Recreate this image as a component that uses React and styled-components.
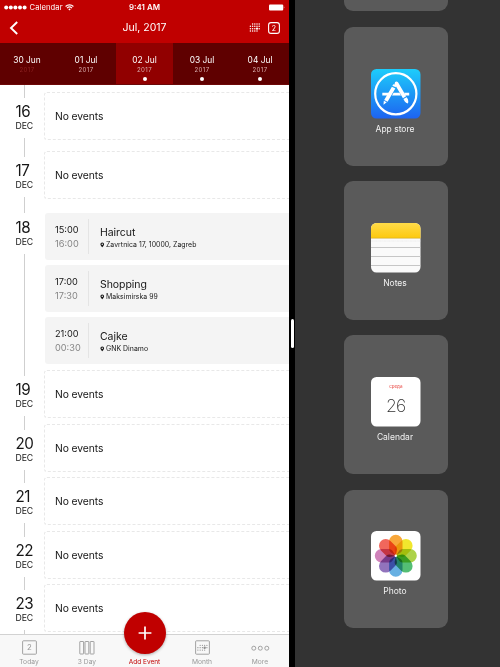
import React from "react";
import styled, { createGlobalStyle, css } from "styled-components";

const Global = createGlobalStyle`
  *, *::before, *::after { box-sizing: border-box; }
  body { margin: 0; overflow: hidden; font-family: Inter, "Liberation Sans", sans-serif; }
`;

const Screen = styled.div`
  display: flex;
  width: 500px;
  height: 667px;
  overflow: hidden;
  background: #333;
`;

/* ---------- Calendar pane ---------- */

const CalendarPane = styled.main`
  display: flex;
  flex-direction: column;
  width: 289px;
  height: 667px;
  background: #fff;
  color: #161616;
  overflow: hidden;
`;

const Header = styled.header`
  flex: none;
  height: 43px;
  background: #c00000;
  color: #fff;
`;

const StatusBar = styled.div`
  display: grid;
  grid-template-columns: 1fr auto 1fr;
  align-items: center;
  height: 14px;
  padding: 1px 4px 0 4px;
  font-size: 7.6px;
  line-height: 13px;
`;

const Carrier = styled.div`
  display: flex;
  align-items: center;
  gap: 2.5px;
  letter-spacing: 0.1px;
`;

const Clock = styled.div`
  font-weight: 600;
  font-size: 7.9px;
`;

const Battery = styled.svg`
  justify-self: end;
  display: block;
`;

const TitleBar = styled.div`
  display: grid;
  grid-template-columns: 1fr auto 1fr;
  align-items: center;
  height: 27px;
  padding: 0 9px;
`;

const Title = styled.h1`
  margin: 0;
  font-size: 10.5px;
  line-height: 14px;
  font-weight: 400;
`;

const Actions = styled.div`
  display: flex;
  justify-content: flex-end;
  align-items: center;
  gap: 8px;
`;

const DateStrip = styled.nav`
  flex: none;
  display: grid;
  grid-template-columns: 58px 58px 57px 58px 58px;
  height: 42px;
  background: #5f0000;
  border-bottom: 1px solid #6d0808;
`;

const DateCell = styled.div`
  display: flex;
  flex-direction: column;
  align-items: center;
  padding-top: 11px;
  padding-right: ${(p) => p.$inset || 0}px;
  background: ${(p) => (p.$active ? "#910000" : "transparent")};
  color: #fff;
  font-size: 8.4px;
  line-height: 12px;
`;

const Year = styled.span`
  font-size: 6.1px;
  line-height: 7px;
  letter-spacing: 0.35px;
  color: ${(p) => (p.$dim ? "#8c2020" : "#d8acac")};
`;

const Dot = styled.span`
  width: 4px;
  height: 4px;
  margin-top: 3.5px;
  border-radius: 50%;
  background: #fff;
`;

const Timeline = styled.section`
  flex: 1;
  min-height: 0;
  overflow: hidden;
`;

const LeadIn = styled.div`
  width: 1px;
  height: 7px;
  margin-left: 24px;
  background: #cfcfcf;
`;

const DayRow = styled.div`
  display: grid;
  grid-template-columns: 44px 1fr;
  height: ${(p) => p.$height}px;
`;

const Rail = styled.div`
  display: flex;
  flex-direction: column;
`;

const RailLine = styled.i`
  width: 1px;
  margin-left: 24px;
  background: #cfcfcf;
  ${(p) => (p.$lead ? css`height: 6px;` : css`flex: 1;`)}
`;

const DayNumber = styled.div`
  padding-left: 15.4px;
  margin-top: ${(p) => (p.$first ? 6 : 5)}px;
  font-size: 15.2px;
  line-height: 17px;
  letter-spacing: -0.3px;
`;

const MonthName = styled.div`
  margin: 0 0 6px;
  padding-left: 15.5px;
  font-size: 8.7px;
  line-height: 12px;
  letter-spacing: -0.1px;
`;

const EmptySlot = styled.div`
  display: flex;
  align-items: center;
  height: 48px;
  padding: 0 0 0 10px;
  border: 1px dashed #e8e8e8;
  border-right: 0;
  border-radius: 3px 0 0 3px;
  font-size: 10.3px;
  letter-spacing: -0.07px;
`;

const EventList = styled.div`
  display: grid;
  grid-auto-rows: 47px;
  gap: 5px;
  padding-left: 1px;
`;

const EventCard = styled.article`
  display: grid;
  grid-template-columns: 44px 1fr;
  align-items: center;
  border-radius: 3px 0 0 3px;
  background: #f4f4f4;
`;

const Times = styled.div`
  height: 35px;
  padding: 4px 0 0 10px;
  border-right: 1px solid #e4e4e4;
  font-size: 9.2px;
  line-height: 14px;
`;

const EndTime = styled.div`
  color: #858585;
`;

const Details = styled.div`
  padding: 3px 0 0 11px;
`;

const EventName = styled.div`
  font-size: 10.5px;
  line-height: 13px;
  letter-spacing: -0.05px;
`;

const Place = styled.div`
  display: flex;
  align-items: center;
  gap: 1.5px;
  font-size: 6.9px;
  line-height: 11px;
  letter-spacing: 0.04px;
`;

const TabBar = styled.nav`
  flex: none;
  display: grid;
  grid-template-columns: 58px 58px 57px 58px 58px;
  height: 33px;
  border-top: 1px solid #d2d2d2;
  background: #f8f8f8;
`;

const Tab = styled.div`
  display: flex;
  flex-direction: column;
  align-items: center;
  justify-content: flex-end;
  height: 32px;
  padding-bottom: 1px;
  color: ${(p) => (p.$accent ? "#c00000" : "#989898")};
  font-size: ${(p) => (p.$accent ? 6.5 : 6.7)}px;
  line-height: 8px;
  white-space: nowrap;

  & > svg { flex: none; margin-bottom: 3px; }
`;

const AddButton = styled.button`
  flex: none;
  display: grid;
  place-items: center;
  width: 42px;
  height: 42px;
  margin-bottom: 4px;
  padding: 0;
  border: 0;
  border-radius: 50%;
  background: #c00000;
  box-shadow: 0 1px 3px rgba(0, 0, 0, 0.3);
`;

/* ---------- Split divider and app picker ---------- */

const Divider = styled.div`
  flex: none;
  display: grid;
  place-items: center;
  width: 6px;
  background: #000;
`;

const Grip = styled.span`
  width: 3px;
  height: 29px;
  border-radius: 2px;
  background: #fff;
`;

const AppPane = styled.aside`
  flex: 1;
  display: flex;
  flex-direction: column;
  align-items: center;
  gap: 15.6px;
  padding-right: 4px;
  background: #333;
`;

const AppCard = styled.div`
  flex: none;
  display: flex;
  flex-direction: column;
  align-items: center;
  width: 104px;
  height: 138.6px;
  padding: 41.6px 1px 0 0;
  border-radius: 9px;
  background: #5a5a5a;
  color: #f2f2f2;
  font-size: 8.5px;
  line-height: 12px;

  & > svg { display: block; margin: 0 0 4.1px 1px; }
`;

const PreviousCard = styled.div`
  flex: none;
  width: 104px;
  height: 11.4px;
  border-radius: 0 0 9px 9px;
  background: #5a5a5a;
`;

/* ---------- Icons ---------- */

const SignalIcon = () => (
  <svg width="23" height="5" viewBox="0 0 23 5" fill="#fff">
    {[2.2, 6.8, 11.4, 16, 20.6].map((x) => <circle key={x} cx={x} cy="2.5" r="2" />)}
  </svg>
);

const WifiIcon = () => (
  <svg width="9" height="7" viewBox="0 0 9 7" fill="none" stroke="#fff" strokeWidth="1.1">
    <path d="M.6 2.5a5.5 5.5 0 0 1 7.8 0M2 4.1a3.6 3.6 0 0 1 5 0" />
    <path d="M3.3 5.2a1.7 1.7 0 0 1 2.4 0L4.5 6.5z" fill="#fff" stroke="none" />
  </svg>
);

const BatteryIcon = () => (
  <Battery width="16" height="7" viewBox="0 0 16 7" fill="#fff">
    <rect x="0" y=".4" width="14.2" height="6" rx="1" />
    <path d="M14.8 2.3q1.2 1.1 0 2.2z" />
  </Battery>
);

const BackIcon = () => (
  <svg width="10" height="14" viewBox="0 0 10 14" fill="none" stroke="#fff" strokeWidth="1.9">
    <path d="M8.2 1 2 7l6.2 6" />
  </svg>
);

const GridIcon = () => (
  <svg width="11" height="9" viewBox="0 0 11 9" fill="#fff">
    {[0, 1, 2, 3].map((r) =>
      [0, 1, 2, 3, 4].map((c) =>
        (r === 0 && c === 0) || (r === 3 && c === 4) ? null : (
          <circle key={`${r}${c}`} cx={1.4 + c * 2.2} cy={1 + r * 2.35} r={r === 2 && c === 3 ? 1.1 : 0.75} />
        )
      )
    )}
  </svg>
);

const DayBoxIcon = () => (
  <svg width="12" height="12" viewBox="0 0 12 12">
    <rect x=".6" y=".6" width="10.8" height="10.8" rx="2.4" fill="none" stroke="#fff" strokeWidth="1.1" />
    <text x="6" y="8.5" textAnchor="middle" fontSize="7" fill="#fff">2</text>
  </svg>
);

const PinIcon = () => (
  <svg width="4.5" height="6" viewBox="0 0 9 12">
    <path fillRule="evenodd" fill="#161616" d="M4.5.8A3.7 3.7 0 0 0 .8 4.5c0 2.4 3.7 6 3.7 6s3.7-3.6 3.7-6A3.7 3.7 0 0 0 4.5.8zm0 2.2a1.5 1.5 0 1 1 0 3 1.5 1.5 0 0 1 0-3z" />
  </svg>
);

const TodayIcon = () => (
  <svg width="15" height="15" viewBox="0 0 15 15">
    <rect x=".6" y=".8" width="13.8" height="13.4" rx=".8" fill="none" stroke="#989898" strokeWidth=".9" />
    <text x="7.5" y="10.3" textAnchor="middle" fontSize="7.8" fill="#989898">2</text>
  </svg>
);

const ThreeDayIcon = () => (
  <svg width="16" height="15" viewBox="0 0 16 15" fill="none" stroke="#989898" strokeWidth=".9">
    {[0.8, 6, 11.2].map((x) => <rect key={x} x={x} y="1.5" width="3.8" height="12.5" rx=".4" />)}
  </svg>
);

const MonthIcon = () => (
  <svg width="15" height="15" viewBox="0 0 15 15" fill="#8c8c8c">
    <rect x=".6" y=".8" width="13.8" height="13.4" rx=".8" fill="none" stroke="#989898" strokeWidth=".9" />
    {[0, 1, 2].map((r) =>
      [0, 1, 2, 3, 4].map((c) =>
        (r === 0 && c === 0) || (r === 2 && c === 4) ? null : (
          <circle key={`${r}${c}`} cx={2.9 + c * 2.25} cy={5.3 + r * 2.4} r={r === 1 && c === 3 ? 1.2 : 0.6} />
        )
      )
    )}
  </svg>
);

const MoreIcon = () => (
  <svg width="19" height="15" viewBox="0 0 19 15" fill="none" stroke="#989898" strokeWidth=".9">
    {[2.8, 9.3, 15.8].map((x) => <circle key={x} cx={x} cy="8.2" r="2" />)}
  </svg>
);

const PlusIcon = () => (
  <svg width="14" height="14" viewBox="0 0 14 14" stroke="#fff" strokeWidth="1.7">
    <path d="M7 .6v12.8M.6 7h12.8" />
  </svg>
);

const AppStoreIcon = () => (
  <svg width="50" height="50" viewBox="0 0 50 50">
    <defs>
      <linearGradient id="store" x2="0" y2="1">
        <stop offset="0" stopColor="#1dcdfb" />
        <stop offset="1" stopColor="#1d63f0" />
      </linearGradient>
    </defs>
    <rect width="49.5" height="49.5" rx="5.5" fill="url(#store)" />
    <circle cx="24.8" cy="24.8" r="20.6" fill="none" stroke="#fff" strokeWidth="2.2" />
    <g fill="#fff">
      <path d="M11.3 23.8h9.8l-1.6 2.8h-8.2zM22.6 23.8h5.9l1.5 2.8h-9zM33 23.8h5.2v2.8h-3.7z" />
      <path d="M20.9 17.7 24.3 19.6 16.6 32.7 13.2 30.9zM21.4 16.7l.7-1.1q.9-.8 2 0l1.2.8-.6 1.9zM12.8 31.7l2.9 1.6-3.2 2.4z" />
      <path d="M24.1 13q1.5-1.3 2.9.2l8.2 14.100-3.300 1.900-8.300-14.300zM32.400 30l3.300-1.800 1.300 2.300q.6 2.400-.1 3.900-2-.5-3.100-2z" />
    </g>
  </svg>
);

const NotesIcon = () => (
  <svg width="50" height="50" viewBox="0 0 50 50">
    <defs>
      <clipPath id="noteShape"><rect width="49.5" height="49.5" rx="5.5" /></clipPath>
      <linearGradient id="noteTop" x2="0" y2="1">
        <stop offset="0" stopColor="#ffdb49" />
        <stop offset="1" stopColor="#fdc90e" />
      </linearGradient>
    </defs>
    <g clipPath="url(#noteShape)">
      <path d="M0 0h50v50H0z" fill="#fafafa" />
      <path d="M0 0h50v15H0z" fill="url(#noteTop)" />
      <path d="M0 15.2h50" stroke="#d2aa22" strokeWidth=".7" />
      <path d="M0 18h50" stroke="#e8e8e8" strokeWidth=".8" strokeDasharray=".8 .5" />
      <path d="M0 24.5h50M0 33.5h50M0 42.5h50" stroke="#b9b9b9" strokeWidth=".8" />
    </g>
  </svg>
);

const CalendarIcon = () => (
  <svg width="50" height="50" viewBox="0 0 50 50">
    <rect width="49.5" height="49.5" rx="5.5" fill="#fff" />
    <text x="24.8" y="11" textAnchor="middle" fontSize="4.5" fill="#e8413c">среда</text>
    <text x="24.6" y="34.8" textAnchor="middle" fontSize="17.5" fontWeight="200" letterSpacing="-.8" fill="#303030">26</text>
  </svg>
);

const petals = ["#f7a029", "#f0e51b", "#a6ce39", "#45b968", "#5aa9e0", "#8867b6", "#cc77b4", "#f05a4e"];

const Petal = styled.path`
  mix-blend-mode: multiply;
`;

const PhotoIcon = () => (
  <svg width="50" height="50" viewBox="0 0 50 50">
    <rect width="49.5" height="49.5" rx="5.5" fill="#fff" />
    {petals.map((fill, i) => (
      <Petal
        key={fill}
        d="M18.1 10.5a6.7 6.7 0 0 1 13.4 0v7.5q0 2-1.5 3.300L24.800 24.600l-5.200-3.300q-1.500-1.300-1.500-3.300z"
        fill={fill}
        fillOpacity=".92"
        transform={`rotate(${i * 45} 24.8 24.8)`}
      />
    ))}
    <circle cx="24.8" cy="24.8" r="1.2" fill="#fff" />
  </svg>
);

/* ---------- Content ---------- */

const dates = [
  { label: "30 Jun", dim: true, inset: 4 },
  { label: "01 Jul", inset: 2 },
  { label: "02 Jul", active: true, dot: true },
  { label: "03 Jul", dot: true },
  { label: "04 Jul", dot: true },
];

const days = [
  { day: 16, height: 59 },
  { day: 17, height: 62 },
  {
    day: 18,
    height: 157,
    events: [
      { start: "15:00", end: "16:00", name: "Haircut", place: "Zavrtnica 17, 10000, Zagreb" },
      { start: "17:00", end: "17:30", name: "Shopping", place: "Maksimirska 99" },
      { start: "21:00", end: "00:30", name: "Cajke", place: "GNK Dinamo" },
    ],
  },
  { day: 19, height: 54 },
  { day: 20, height: 53 },
  { day: 21, height: 54 },
  { day: 22, height: 53 },
  { day: 23, height: 53 },
];

const apps = [
  { name: "App store", Icon: AppStoreIcon },
  { name: "Notes", Icon: NotesIcon },
  { name: "Calendar", Icon: CalendarIcon },
  { name: "Photo", Icon: PhotoIcon },
];

const Day = ({ day, height, events }) => (
  <DayRow $height={height}>
    <Rail>
      {!events && <RailLine $lead />}
      <DayNumber $first={Boolean(events)}>{day}</DayNumber>
      <MonthName>DEC</MonthName>
      <RailLine />
    </Rail>
    {events ? (
      <EventList>
        {events.map((e) => (
          <EventCard key={e.name}>
            <Times>
              <div>{e.start}</div>
              <EndTime>{e.end}</EndTime>
            </Times>
            <Details>
              <EventName>{e.name}</EventName>
              <Place><PinIcon />{e.place}</Place>
            </Details>
          </EventCard>
        ))}
      </EventList>
    ) : (
      <EmptySlot>No events</EmptySlot>
    )}
  </DayRow>
);

export default function App() {
  return (
    <>
      <Global />
      <Screen>
        <CalendarPane>
          <Header>
            <StatusBar>
              <Carrier><SignalIcon />Calendar<WifiIcon /></Carrier>
              <Clock>9:41 AM</Clock>
              <BatteryIcon />
            </StatusBar>
            <TitleBar>
              <BackIcon />
              <Title>Jul, 2017</Title>
              <Actions><GridIcon /><DayBoxIcon /></Actions>
            </TitleBar>
          </Header>
          <DateStrip>
            {dates.map((d) => (
              <DateCell key={d.label} $active={d.active} $inset={d.inset}>
                {d.label}
                <Year $dim={d.dim}>2017</Year>
                {d.dot && <Dot />}
              </DateCell>
            ))}
          </DateStrip>
          <Timeline>
            <LeadIn />
            {days.map((d) => <Day key={d.day} {...d} />)}
          </Timeline>
          <TabBar>
            <Tab><TodayIcon />Today</Tab>
            <Tab><ThreeDayIcon />3 Day</Tab>
            <Tab $accent><AddButton aria-label="Add"><PlusIcon /></AddButton>Add Event</Tab>
            <Tab><MonthIcon />Month</Tab>
            <Tab><MoreIcon />More</Tab>
          </TabBar>
        </CalendarPane>
        <Divider><Grip /></Divider>
        <AppPane>
          <PreviousCard />
          {apps.map(({ name, Icon }) => <AppCard key={name}><Icon />{name}</AppCard>)}
        </AppPane>
      </Screen>
    </>
  );
}
